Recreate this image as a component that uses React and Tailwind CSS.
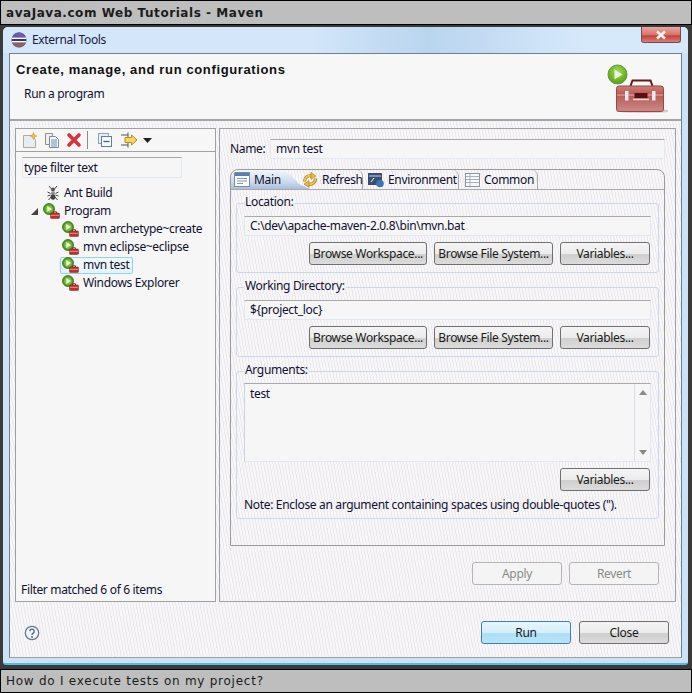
const FONT = "font-['Noto_Sans',sans-serif] text-[12px] leading-[16px] tracking-[-0.33px]"
const DITHER = 'bg-[repeating-linear-gradient(80deg,#f9f8ee_0px,#f9f8ee_1px,#eee7f3_1px,#eee7f3_2px,#f4f8fc_2px,#f4f8fc_3px)]'

function RunIcon() {
  return (
    <svg width="17" height="16" viewBox="0 0 17 16" className="shrink-0">
      <circle cx="6" cy="6" r="5.500" fill="#4f9a1e" stroke="#2f6f12" strokeWidth="0.800" />
      <circle cx="6" cy="6" r="3.800" fill="#7cc23a" />
      <path d="M4.300 3l4.600 3-4.600 3z" fill="#f4fbee" />
      <path d="M10.500 10V8.800h3V10" fill="none" stroke="#7a2a2a" />
      <rect x="7.500" y="10" width="9" height="5.500" rx="0.800" fill="#b8312f" stroke="#8f2020" strokeWidth="0.500" />
      <path d="M8 12.300h8" stroke="#f0b0a8" strokeWidth="0.800" />
    </svg>
  )
}

function EclipseIcon() {
  return (
    <svg width="16" height="16" viewBox="0 0 16 16" className="shrink-0">
      <circle cx="8" cy="8" r="7.500" fill="#3f2f7f" />
      <path d="M1 6.200h14M1 9.800h14" stroke="#ffffff" strokeWidth="1.400" />
      <path d="M1.500 5a7 7 0 0 1 13 0z" fill="#6a5aa8" />
      <path d="M1.500 11a7 7 0 0 0 13 0z" fill="#d08a3a" opacity="0.550" />
    </svg>
  )
}

function Toolbox() {
  return (
    <svg width="62" height="52" viewBox="0 0 62 52" className="shrink-0">
      <defs>
        <linearGradient id="box" x1="0" y1="0" x2="0" y2="1">
          <stop offset="0" stopColor="#cf7c78" />
          <stop offset="0.350" stopColor="#b85a57" />
          <stop offset="1" stopColor="#c98a88" />
        </linearGradient>
        <radialGradient id="ball" cx="0.500" cy="0.350" r="0.700">
          <stop offset="0" stopColor="#a5dc55" />
          <stop offset="1" stopColor="#4f9a12" />
        </radialGradient>
      </defs>
      <ellipse cx="38" cy="48" rx="28" ry="2" fill="#d9c8cc" />
      <path d="M24.500 23l2-5.500h18l2 5.500" fill="none" stroke="#5c1c1c" strokeWidth="2" />
      <rect x="10.500" y="23" width="47" height="25.500" rx="2.500" fill="url(#box)" stroke="#9a4644" />
      <path d="M11 32h46" stroke="#e5b0ac" />
      <rect x="19" y="28" width="3.500" height="9.500" fill="#f0eeee" />
      <rect x="46" y="28" width="3.500" height="9.500" fill="#f0eeee" />
      <rect x="28.500" y="30" width="13" height="5" fill="#5c0f0f" />
      <path d="M27 36.500h16" stroke="#f0dcdc" strokeWidth="1.500" />
      <circle cx="11.500" cy="11.500" r="9.500" fill="url(#ball)" stroke="#5f9a2a" />
      <path d="M8.500 6.500l8 5-8 5z" fill="#e8f6e0" />
    </svg>
  )
}

function AntIcon() {
  return (
    <svg width="14" height="16" viewBox="0 0 14 16" className="shrink-0">
      <path d="M3 1l2.500 3M11 1L8.500 4M1.500 7l3 1.500M12.500 7l-3 1.500M1.500 11l3-1M12.500 11l-3-1M2.500 15l2.500-3M11.500 15L9 12" stroke="#444" fill="none" />
      <ellipse cx="7" cy="4.500" rx="2" ry="2" fill="#555" />
      <ellipse cx="7" cy="8" rx="2" ry="1.800" fill="#8a8a8a" />
      <ellipse cx="7" cy="12" rx="2.400" ry="2.800" fill="#444" />
    </svg>
  )
}

function ToolbarIcons() {
  return (
    <div className="flex items-center h-[22px] pl-[6px]">
      <svg width="16" height="16" viewBox="0 0 16 16" className="shrink-0">
        <path d="M1.500 3.500h8l4 4v8h-12z" fill="#e4eefa" stroke="#b7a98a" />
        <path d="M11.500 0.500l1 2.500 2.500 1-2.500 1-1 2.500-1-2.500-2.500-1 2.500-1z" fill="#f3c244" stroke="#b98a1c" strokeWidth="0.500" />
      </svg>
      <svg width="16" height="16" viewBox="0 0 16 16" className="ml-[6px] shrink-0">
        <path d="M1.500 1.500h7v11h-7z" fill="#eef0f2" stroke="#9a9078" />
        <path d="M5.500 4.500h6l3 3v8h-9z" fill="#f6f8fb" stroke="#7f8ca0" />
        <path d="M7 8h6M7 10h6M7 12h6M7 14h6" stroke="#6d8dbb" />
      </svg>
      <svg width="16" height="16" viewBox="0 0 16 16" className="ml-[6px] shrink-0">
        <path d="M3 3l10 10M13 3L3 13" stroke="#d8323a" strokeWidth="3.600" strokeLinecap="round" />
      </svg>
      <span className="ml-[5px] w-px h-[18px] bg-[#8a8a8a]" />
      <svg width="14" height="14" viewBox="0 0 14 14" className="ml-[10px] shrink-0">
        <rect x="0.500" y="0.500" width="10" height="10" fill="#e8edf5" stroke="#8ea3c4" />
        <rect x="3.500" y="3.500" width="10" height="10" fill="#f6f8fc" stroke="#5f7ba6" />
        <path d="M5.500 8.500h6" stroke="#3f5f90" strokeWidth="1.300" />
      </svg>
      <svg width="18" height="16" viewBox="0 0 18 16" className="ml-[8px] shrink-0">
        <path d="M1 3h7M1 13h7M8 0.500v5M8 10.500v5" stroke="#555" />
        <path d="M5 5.500h6.500V3l5.500 5-5.500 5v-2.500H5z" fill="#f5d66a" stroke="#b98a1c" />
      </svg>
      <svg width="9" height="5" viewBox="0 0 9 5" className="ml-[5px] shrink-0">
        <path d="M0 0h9L4.500 5z" fill="#222" />
      </svg>
    </div>
  )
}

function TreeRow({ indent, icon, children, arrow = false }) {
  return (
    <div className={`h-[18px] flex items-center ${indent}`}>
      {arrow && (
        <svg width="7" height="7" viewBox="0 0 7 7" className="shrink-0 mr-[5px]">
          <path d="M7 0v7H0z" fill="#444" />
        </svg>
      )}
      {icon}
      <span className="ml-[4px] whitespace-nowrap">{children}</span>
    </div>
  )
}

function SelectedRow({ children }) {
  return (
    <div className="h-[18px] flex items-center pl-[44px]">
      <div className="h-[17px] flex items-center pl-[1px] pr-[3px] rounded-[2px] border border-[#8fd3ef] bg-[linear-gradient(180deg,#f2fafe_0%,#e2f3fb_100%)]">
        <RunIcon />
        <span className="ml-[4px] whitespace-nowrap">{children}</span>
      </div>
    </div>
  )
}

function Button({ children, width = 'w-[90px]', kind = 'normal' }) {
  const look = {
    normal: 'border-[#707070] bg-[linear-gradient(180deg,#f4f4f4_0%,#ececec_50%,#cfcfcf_55%,#dcdcdc_100%)] text-[#1a1a1a]',
    primary: 'border-[#3c7fb1] bg-[linear-gradient(180deg,#e8f6fd_0%,#d4eefb_50%,#aedff6_55%,#b9e4f7_100%)] text-[#1a1a1a]',
    disabled: 'border-[#b5b5b5] bg-[#f4f4f4] text-[#8a8a8a]',
  }[kind]
  return (
    <div className={`${width} h-[23px] shrink-0 flex items-center justify-center whitespace-nowrap rounded-[3px] border ${look}`}>
      {children}
    </div>
  )
}

function TextField({ children, className = 'h-[20px] pl-[5px]' }) {
  return (
    <div className={`flex items-center bg-[#f6f6f7] border border-[#e0e8f2] border-t-[#a9a9a9] ${className}`}>
      {children}
    </div>
  )
}

function BrowseRow() {
  return (
    <div className="flex justify-end gap-[7px] mt-[6px] mr-[1px]">
      <Button width="w-[118px]">Browse Workspace...</Button>
      <Button width="w-[119px]">Browse File System...</Button>
      <Button>Variables...</Button>
    </div>
  )
}

function Group({ label, children, className = '' }) {
  return (
    <div className={`relative mx-[5px] px-[7px] rounded-[3px] border border-[#cbd8ea] ${className}`}>
      <span className={`absolute left-[7px] top-[-10px] px-[1px] ${DITHER}`}>{label}</span>
      {children}
    </div>
  )
}

function Tab({ icon, children, className = '' }) {
  return (
    <div className={`h-[19px] flex items-center ${className}`}>
      {icon}
      <span className="ml-[4px] whitespace-nowrap">{children}</span>
    </div>
  )
}

export default function App() {
  return (
    <div className={`${FONT} w-[692px] h-[693px] flex flex-col bg-[#3a3a3a] text-[#101030] overflow-hidden`}>
      {/* Page title */}
      <div className="h-[25px] shrink-0 flex items-center pl-[5px] bg-[#bebebe] border border-black font-['DejaVu_Sans',sans-serif] font-bold text-[12px] tracking-[0.55px] text-[#1c1c1c]">
        avaJava.com Web Tutorials - Maven
      </div>

      {/* Dialog window */}
      <div className="mt-[2px] ml-[3px] mr-[4px] h-[638px] shrink-0 flex flex-col px-[6px] pb-[5px] rounded-t-[5px] rounded-b-[3px] bg-[#cbe2f7] border-b-2 border-b-[#58b8e0]">
        <div className="h-[26px] shrink-0 -mx-[6px] pl-[8px] pr-[7px] flex items-start justify-between rounded-t-[5px] bg-[linear-gradient(90deg,#d3e6fa_0%,#d3e6fa_45%,#b9d5ee_62%,#c3dbf2_70%,#d6e9fb_85%)]">
          <div className="flex items-center h-[26px] text-[#1a1a40]">
            <EclipseIcon />
            <span className="ml-[5px]">External Tools</span>
          </div>
          <div className="w-[40px] h-[16px] flex items-center justify-center rounded-b-[3px] border border-t-0 border-[#7a4a4a] bg-[linear-gradient(180deg,#e8a8a0_0%,#d9736a_50%,#c0433a_60%,#d8807a_100%)]">
            <svg width="12" height="10" viewBox="0 0 12 10">
              <path d="M2 1.500l8 7M10 1.500l-8 7" stroke="#f4f4f4" strokeWidth="2.600" />
            </svg>
          </div>
        </div>

        <div className={`flex-1 flex flex-col border border-[#6f7f8f] border-b-[#a0a0a0] ${DITHER}`}>
          {/* Banner */}
          <div className="h-[67px] shrink-0 flex justify-between bg-[#f7f7f7] border-b-2 border-[#a4a4a4] pl-[6px] pr-[13px]">
            <div>
              <div className="mt-[8px] font-['Liberation_Sans',sans-serif] font-bold text-[13px] tracking-[0.63px] text-[#111]">Create, manage, and run configurations</div>
              <div className="mt-[8px] ml-[8px]">Run a program</div>
            </div>
            <div className="mt-[9px]"><Toolbox /></div>
          </div>

          <div className="flex mt-[7px] ml-[5px] mr-[5px] gap-[3px] h-[474px]">
            {/* Left tree panel */}
            <div className="w-[201px] shrink-0 flex flex-col bg-[#f6f6f6] border border-[#a0a0a0]">
              <div className="border-b border-[#a0a0a0]"><ToolbarIcons /></div>
              <TextField className="mt-[5px] ml-[6px] w-[160px] h-[21px] pl-[1px]">type filter text</TextField>
              <div className="mt-[6px] flex-1">
                <TreeRow indent="pl-[30px]" icon={<AntIcon />}>Ant Build</TreeRow>
                <TreeRow indent="pl-[15px]" arrow icon={<RunIcon />}>Program</TreeRow>
                <TreeRow indent="pl-[46px]" icon={<RunIcon />}>mvn archetype~create</TreeRow>
                <TreeRow indent="pl-[46px]" icon={<RunIcon />}>mvn eclipse~eclipse</TreeRow>
                <SelectedRow>mvn test</SelectedRow>
                <TreeRow indent="pl-[46px]" icon={<RunIcon />}>Windows Explorer</TreeRow>
              </div>
              <div className="pl-[5px] pb-[3px]">Filter matched 6 of 6 items</div>
            </div>

            {/* Right config panel */}
            <div className="flex-1 flex flex-col border border-[#a0a0a0] pl-[10px] pr-[10px]">
              <div className="flex items-center mt-[10px] h-[20px]">
                <span className="w-[40px] shrink-0">Name:</span>
                <TextField className="flex-1 h-[20px] pl-[5px]">mvn test</TextField>
              </div>

              <div className="mt-[10px] h-[377px] shrink-0 border border-[#9a9a9a] rounded-t-[8px] flex flex-col">
                <div className="h-[20px] shrink-0 flex border-b border-[#a9a9a9]">
                  <Tab className="w-[79px] pl-[3px] bg-[linear-gradient(180deg,#f3f6fb_0%,#cfdcee_60%,#a9bfdc_100%)] [clip-path:polygon(6px_0,52px_0,58px_3px,68px_14px,79px_19px,0_19px,0_6px)]" icon={
                    <svg width="16" height="15" viewBox="0 0 16 15" className="shrink-0">
                      <rect x="0.500" y="0.500" width="15" height="14" fill="#f8fafc" stroke="#7f8ca0" />
                      <rect x="1" y="1" width="14" height="3" fill="#5c7db0" />
                      <path d="M3 6.500h10M3 9h10M3 11.500h6" stroke="#8b9bb5" />
                    </svg>
                  }>Main</Tab>
                  <Tab className="w-[62px] -ml-[9px] pl-[1px] border-r border-[#a9a9a9] rounded-tr-[6px]" icon={
                    <svg width="16" height="16" viewBox="0 0 16 16" className="shrink-0">
                      <path d="M2.500 9.500a5.500 5.500 0 0 1 7-5.500" fill="none" stroke="#a87a18" strokeWidth="3.200" />
                      <path d="M13.500 6.500a5.500 5.500 0 0 1-7 5.500" fill="none" stroke="#a87a18" strokeWidth="3.200" />
                      <path d="M2.500 9.500a5.500 5.500 0 0 1 7-5.500" fill="none" stroke="#f0c64a" strokeWidth="1.800" />
                      <path d="M13.500 6.500a5.500 5.500 0 0 1-7 5.500" fill="none" stroke="#f0c64a" strokeWidth="1.800" />
                      <path d="M9 0.500l5 3.500-5 3.500z" fill="#e8b93a" stroke="#a87a18" strokeWidth="0.600" />
                      <path d="M7 8.500l-5 3.500 5 3.500z" fill="#e8b93a" stroke="#a87a18" strokeWidth="0.600" />
                    </svg>
                  }>Refresh</Tab>
                  <Tab className="w-[96px] pl-[5px] border-r border-[#a9a9a9] rounded-tr-[6px]" icon={
                    <svg width="16" height="16" viewBox="0 0 16 16" className="shrink-0">
                      <rect x="0.500" y="1.500" width="13" height="11" fill="#3a4f70" stroke="#3a4f70" />
                      <path d="M1 4h12" stroke="#8fa6c8" strokeWidth="1.500" />
                      <path d="M3 10l3-4" stroke="#fff" />
                      <circle cx="12" cy="11.500" r="3.800" fill="#3f72b8" />
                    </svg>
                  }>Environment</Tab>
                  <Tab className="w-[79px] pl-[6px] border-r border-[#a9a9a9] rounded-tr-[6px]" icon={
                    <svg width="15" height="14" viewBox="0 0 15 14" className="shrink-0">
                      <rect x="0.500" y="0.500" width="14" height="13" fill="#f8fafc" stroke="#8b95a5" />
                      <path d="M1 3.500h13M1 6.500h13M1 9.500h13M5 1v12" stroke="#a4b1c5" />
                    </svg>
                  }>Common</Tab>
                </div>

                <Group label="Location:" className="mt-[13px] h-[70px] pt-[12px]">
                  <TextField>C:\dev\apache-maven-2.0.8\bin\mvn.bat</TextField>
                  <BrowseRow />
                </Group>

                <Group label="Working Directory:" className="mt-[14px] h-[70px] pt-[12px]">
                  <TextField>{'${project_loc}'}</TextField>
                  <BrowseRow />
                </Group>

                <Group label="Arguments:" className="mt-[14px] h-[148px] pt-[11px]">
                  <div className="h-[79px] flex bg-[#f6f6f7] border border-[#e0e8f2] border-t-[#a9a9a9] border-l-[#c8d4e4]">
                    <div className="flex-1 pl-[5px] pt-[2px]">test</div>
                    <div className="w-[16px] flex flex-col items-center justify-between py-[6px] border-l border-[#d8dce4]">
                      <svg width="8" height="5" viewBox="0 0 8 5"><path d="M0 5l4-5 4 5z" fill="#888" /></svg>
                      <svg width="8" height="5" viewBox="0 0 8 5"><path d="M0 0l4 5 4-5z" fill="#888" /></svg>
                    </div>
                  </div>
                  <div className="flex justify-end mt-[6px] mr-[1px]"><Button>Variables...</Button></div>
                  <div className="mt-[6px] whitespace-nowrap">Note: Enclose an argument containing spaces using double-quotes (").</div>
                </Group>
              </div>

              <div className="flex justify-end gap-[7px] mt-[16px] mr-[6px]">
                <Button kind="disabled">Apply</Button>
                <Button kind="disabled">Revert</Button>
              </div>
            </div>
          </div>

          {/* Bottom buttons */}
          <div className="flex items-center justify-between mt-[19px] pl-[14px] pr-[12px]">
            <svg width="16" height="16" viewBox="0 0 16 16" className="shrink-0">
              <circle cx="8" cy="8" r="6.700" fill="#f4f6f9" stroke="#5f7a98" strokeWidth="1.300" />
              <path d="M5.800 6.200a2.200 2.200 0 1 1 3.400 1.900c-.8.500-1.200.9-1.200 1.900" fill="none" stroke="#4a6482" strokeWidth="1.300" />
              <circle cx="8" cy="12" r="0.900" fill="#4a6482" />
            </svg>
            <div className="flex gap-[8px]">
              <Button kind="primary">Run</Button>
              <Button>Close</Button>
            </div>
          </div>
        </div>
      </div>

      {/* Page caption */}
      <div className="mt-[4px] flex-1 flex items-center pl-[5px] bg-[#bebebe] border border-black font-['DejaVu_Sans',sans-serif] text-[12px] tracking-[0.75px] text-[#1c1c1c]">
        How do I execute tests on my project?
      </div>
    </div>
  )
}
